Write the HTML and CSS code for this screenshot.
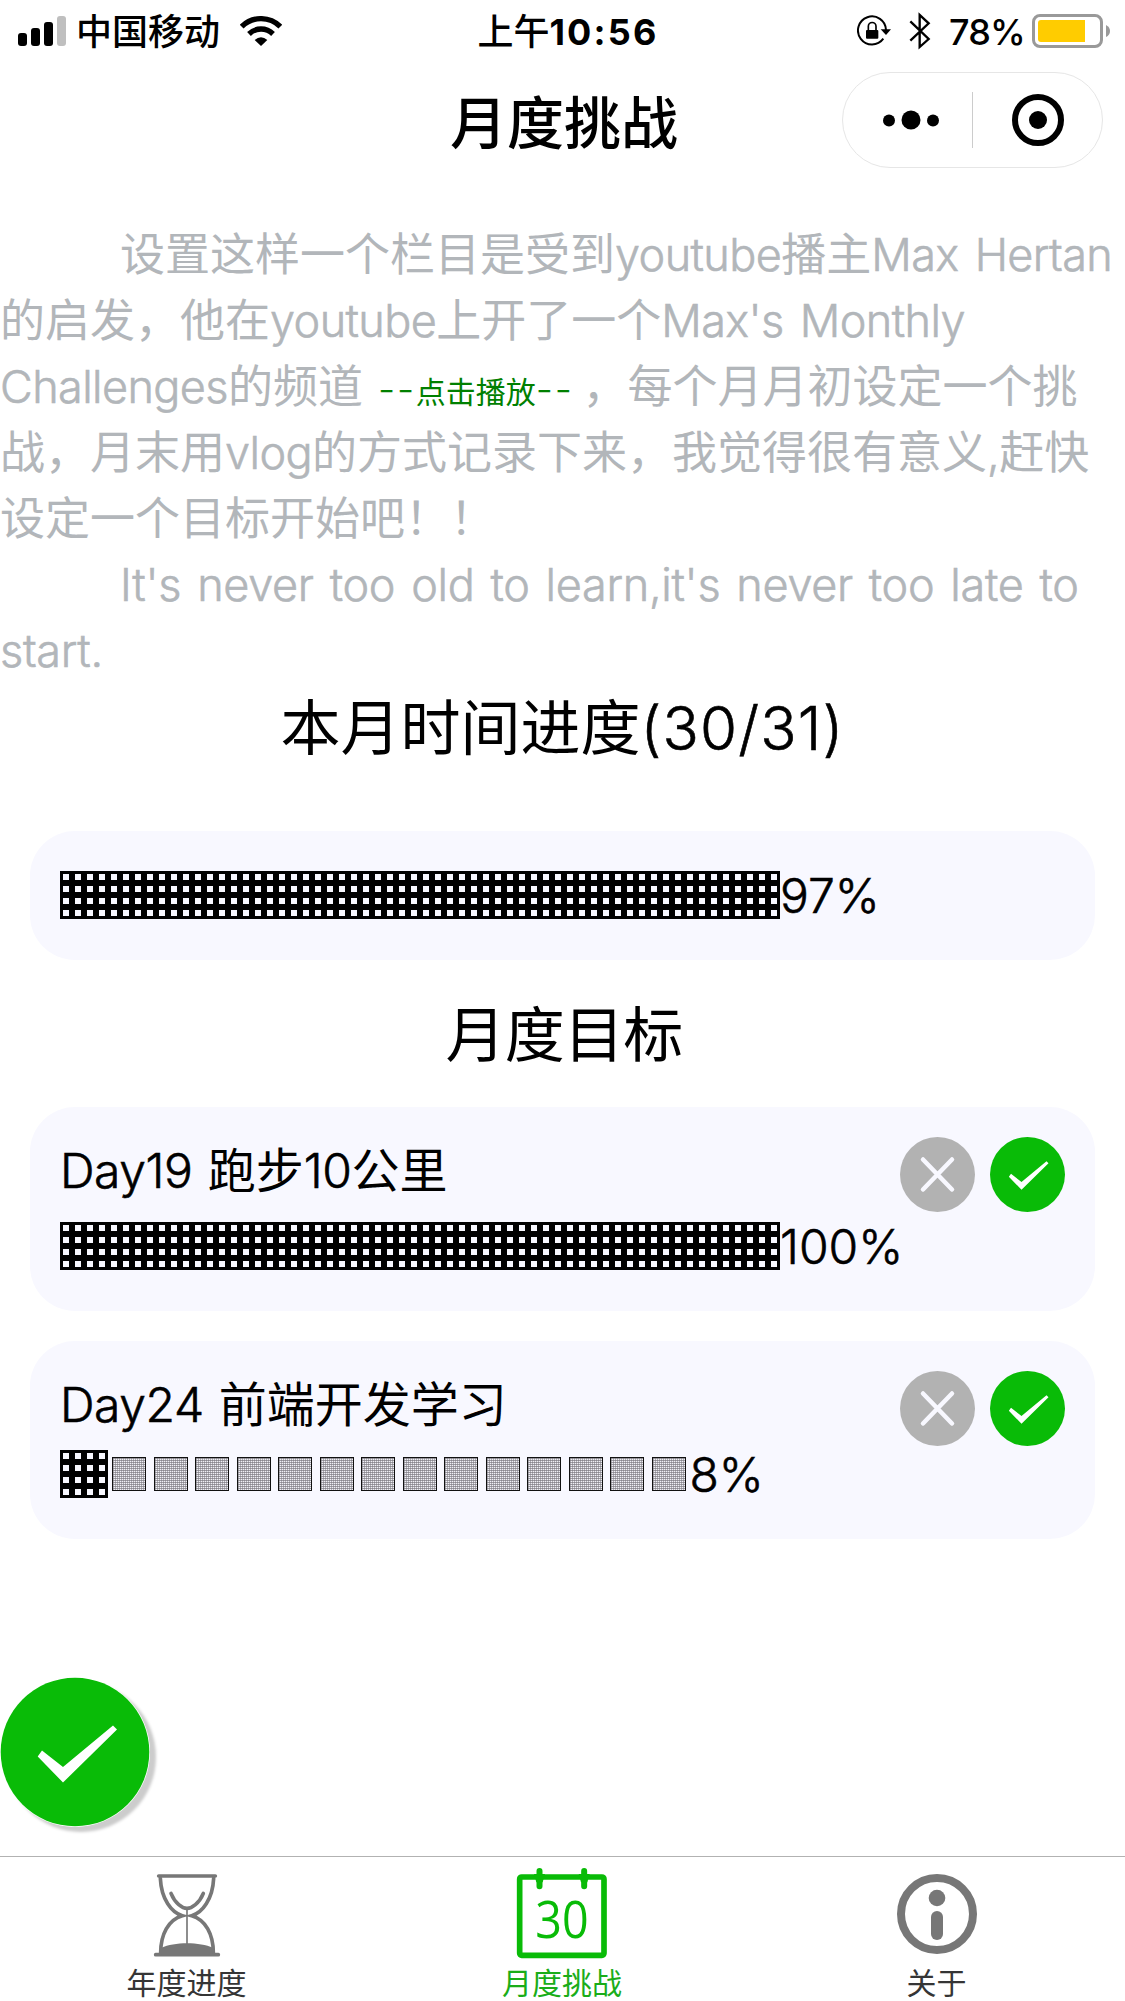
FILE: index.html
```html
<!DOCTYPE html>
<html lang="zh-CN">
<head>
<meta charset="utf-8">
<title>月度挑战</title>
<link rel="stylesheet" href="styles.css">
</head>
<body>
<header class="status-bar">
  <div class="status-left">
    <svg class="signal" width="48" height="30" viewBox="0 0 48 30"><rect y="17" width="9" height="13" rx="3"/><rect x="13" y="12" width="9" height="18" rx="3"/><rect x="26" y="6" width="9" height="24" rx="3"/><rect x="39" width="9" height="30" rx="3" fill="#bfbfbf"/></svg>
    <span class="carrier">中国移动</span>
    <svg class="wifi" width="42" height="30" viewBox="720 44 126 90"><path d="M725 76A82 82 0 0 1 841 76M747 98A51 51 0 0 1 819 98" fill="none" stroke="#000" stroke-width="16"/><path d="M783 134L764 116Q783 99 802 116Z"/></svg>
  </div>
  <div class="clock">上午<b class="en">10:56</b></div>
  <div class="status-right">
    <svg class="lock" width="35" height="32" viewBox="170 43 105 96"><path d="M249 114A42 42 0 1 1 257 88" fill="none" stroke="#000" stroke-width="6"/><path d="M241 86H272L257 103Z"/><rect x="197" y="88" width="37" height="26" rx="3"/><path d="M204 90V77A11.500 11.500 0 0 1 227 77V90" fill="none" stroke="#000" stroke-width="5"/></svg>
    <svg class="bluetooth" width="22" height="38" viewBox="326 34 66 114"><path d="M330 62L385 115L358 139V43L385 68L330 120" fill="none" stroke="#000" stroke-width="7"/></svg>
    <span class="percent en">78%</span>
    <svg class="battery" width="79" height="34" viewBox="0 0 79 34"><rect x="1.500" y="1.500" width="68" height="31" rx="6.500" fill="none" stroke="#999" stroke-width="3"/><path d="M9 6H53V28H9Q6 28 6 25V9Q6 6 9 6Z" fill="#fc0"/><path d="M74 11Q78 13 78 17T74 23Z" fill="#999"/></svg>
  </div>
</header>
<nav class="nav-bar">
  <h1 class="nav-title">月度挑战</h1>
  <div class="capsule">
    <svg width="56" height="20" viewBox="0 0 56 20"><circle cx="6" cy="10.500" r="6"/><circle cx="28" cy="10" r="9.500"/><circle cx="50" cy="10.500" r="6"/></svg>
    <i class="capsule-line"></i>
    <svg width="52" height="52" viewBox="0 0 52 52"><circle cx="26" cy="26" r="23" fill="none" stroke="#000" stroke-width="6"/><circle cx="26" cy="26" r="9"/></svg>
  </div>
</nav>
<main>
  <section class="intro">
    <p>设置这样一个栏目是受到<span class="en">youtube</span>播主<span class="en">Max Hertan</span><br>的启发，他在<span class="en">youtube</span>上开了一个<span class="en">Max's Monthly</span><br><span class="en">Challenges</span>的频道<a class="play"><span class="dash">--</span>点击播放<span class="dash">--</span></a>，每个月月初设定一个挑<br>战，月末用<span class="en">vlog</span>的方式记录下来，我觉得很有意义<span class="en">,</span>赶快<br>设定一个目标开始吧！！</p>
    <p class="motto"><span class="en">It's never too old to learn,it's never too late to</span><br><span class="en">start.</span></p>
  </section>
  <h2 class="heading">本月时间进度<span class="en">(30/31)</span></h2>
  <section class="card">
    <div class="progress"><i class="done" style="width:720px"></i><span class="en">97%</span></div>
  </section>
  <h2 class="heading goals">月度目标</h2>
  <section class="card">
    <div class="goal-head"><span><span class="en">Day19 </span>跑步<span class="en">10</span>公里</span>
      <span class="actions"><svg class="ico" viewBox="0 0 75 75"><circle cx="37.500" cy="37.500" r="37.500" fill="#b2b2b2"/><path d="M23 22.500L52 52.500M52 22.500L23 52.500" stroke="#f8f8ff" stroke-width="4.500" stroke-linecap="round"/></svg><svg class="ico" viewBox="0 0 150 150"><circle cx="75" cy="75" r="75" fill="#09bb07"/><path d="M37.700 79.500L42 73.500L63 90L113 48.500L117 52.500L63 105.500Z" fill="#fff"/></svg></span>
    </div>
    <div class="progress"><i class="done" style="width:720px"></i><span class="en">100%</span></div>
  </section>
  <section class="card compact">
    <div class="goal-head"><span><span class="en">Day24 </span>前端开发学习</span>
      <span class="actions"><svg class="ico" viewBox="0 0 75 75"><circle cx="37.500" cy="37.500" r="37.500" fill="#b2b2b2"/><path d="M23 22.500L52 52.500M52 22.500L23 52.500" stroke="#f8f8ff" stroke-width="4.500" stroke-linecap="round"/></svg><svg class="ico" viewBox="0 0 150 150"><circle cx="75" cy="75" r="75" fill="#09bb07"/><path d="M37.700 79.500L42 73.500L63 90L113 48.500L117 52.500L63 105.500Z" fill="#fff"/></svg></span>
    </div>
    <div class="progress"><i class="done" style="width:48px"></i><span class="todo"><i></i><i></i><i></i><i></i><i></i><i></i><i></i><i></i><i></i><i></i><i></i><i></i><i></i><i></i></span><span class="en">8%</span></div>
  </section>
</main>
<button class="fab"><svg width="150" height="150" viewBox="0 0 150 150"><circle cx="75" cy="75" r="74.300" fill="#09bb07"/><path d="M37.700 79.500L42 73.500L63 90L113 48.500L117 52.500L63 105.500Z" fill="#fff"/></svg></button>
<footer class="tab-bar">
  <a class="tab"><svg width="70" height="88" viewBox="456 660 210 264"><g fill="none" stroke="#777" stroke-width="11" stroke-linecap="round"><path d="M476 675H646M467 911H655"/><path d="M481 682C484 745 515 785 547 794C505 806 482 850 482 905M641 682C638 745 607 785 575 794C617 806 640 850 640 905"/><path d="M513 727C525 757 547 772 561 772S598 757 610 727"/><path d="M561 775V885" stroke-width="5"/></g><path d="M485 908V890C520 872 602 872 638 890V908Z" fill="#777"/></svg><span>年度进度</span></a>
  <a class="tab active"><svg width="92" height="92" viewBox="168 84 276 276"><rect x="179" y="114" width="253" height="235" rx="6" fill="none" stroke="#09bb07" stroke-width="17"/><path d="M238.500 96V142M372.500 96V142" stroke="#09bb07" stroke-width="18" stroke-linecap="round"/><path d="M222 105H255L248 130H229ZM356 105H389L382 130H363Z" fill="#09bb07"/><text class="cal-day" x="226" y="297" textLength="160" lengthAdjust="spacingAndGlyphs">30</text></svg><span>月度挑战</span></a>
  <a class="tab"><svg class="info" width="80" height="80" viewBox="0 0 80 80" fill="#777"><circle cx="40" cy="40" r="36" fill="none" stroke="#777" stroke-width="8"/><circle cx="40" cy="24" r="8.300"/><rect x="34" y="37" width="12" height="29" rx="6"/></svg><span>关于</span></a>
</footer>
</body>
</html>
```
FILE: styles.css
```css
* { box-sizing: border-box; }
body {
  margin: 0;
  width: 1125px;
  height: 2001px;
  display: flex;
  flex-direction: column;
  overflow: hidden;
  background: #fff;
  color: #000;
  font-family: Inter, "Noto Sans CJK SC", sans-serif;
}
h1, h2, p { margin: 0; }
svg { display: block; flex: none; }

.status-bar {
  height: 60px;
  display: grid;
  grid-template-columns: 1fr auto 1fr;
  align-items: center;
  padding: 0 14px 0 18px;
  font-size: 36px;
  line-height: 60px;
  font-weight: 500;
}
.status-left, .status-right { display: flex; align-items: center; }
.status-right { justify-content: flex-end; }
.carrier { margin-left: 10px; padding-top: 2px; }
.wifi { margin-left: 20px; }
.clock { padding: 2px 0 0 7px; }
.clock b { font-weight: 700; letter-spacing: 2.2px; }
.lock { margin-right: 17px; }
.bluetooth { margin-right: 18px; }
.percent { padding-top: 2px; letter-spacing: -0.8px; }
.battery { margin-left: 7px; }

.nav-bar {
  height: 161px;
  display: grid;
  grid-template-columns: 1fr auto 1fr;
}
.nav-title {
  grid-column: 2;
  padding-left: 3px;
  font-size: 57px;
  line-height: 128px;
  font-weight: 500;
}
.capsule {
  justify-self: end;
  margin: 12px 22px 0 0;
  width: 261px;
  height: 96px;
  border: 1px solid #e6e6e6;
  border-radius: 48px;
  display: flex;
  align-items: center;
  padding-left: 40px;
}
.capsule-line { width: 1px; height: 56px; margin: 0 39px 0 33px; background: #ccc; }

main .en { font-weight: 300; -webkit-text-stroke: 0.6px currentColor; }

.intro {
  height: 462px;
  padding-top: 1px;
  font-size: 45px;
  line-height: 66px;
  font-weight: 400;
  color: #b2b6ba;
  white-space: nowrap;
}
.intro p { text-indent: 120px; }
.intro .en { letter-spacing: -0.6px; word-spacing: 4px; }
.intro .motto .en { letter-spacing: -0.3px; word-spacing: 3.6px; }
.play { font-size: 30px; line-height: 1; color: #008000; margin: 0 9px 0 15px; }
.dash { font-size: 38px; line-height: 1; font-weight: 300; letter-spacing: 1.7px; }

.heading {
  font-size: 60px;
  line-height: 90px;
  font-weight: 400;
  text-align: center;
}
.heading .en { letter-spacing: 1.1px; }
.goals { margin-top: 30px; margin-bottom: 27px; padding-left: 3px; letter-spacing: -0.8px; }
.heading:not(.goals) { margin-bottom: 58px; }

.card {
  margin: 0 30px;
  padding: 30px;
  border-radius: 45px;
  background: #f8f8ff;
  font-size: 48px;
  font-weight: 400;
}
.card.compact { margin-top: 30px; }
.goal-head {
  display: flex;
  justify-content: space-between;
  height: 75px;
  line-height: 67px;
  white-space: pre;
}
.goal-head .en { letter-spacing: -0.4px; word-spacing: 2px; }
.compact .goal-head { height: 69px; }
.actions { display: flex; gap: 15px; }
.ico { width: 75px; height: 75px; }
.progress { display: flex; align-items: center; height: 69px; line-height: 69px; }
.done {
  height: 48px;
  margin-bottom: 2px;
  background:
    linear-gradient(90deg, #000 3px, transparent 3px 9px, #000 9px) 0 0 / 12px 12px,
    linear-gradient(#000 3px, transparent 3px 9px, #000 9px) 0 0 / 12px 12px;
}
.todo { display: flex; gap: 7.5px; margin: 0 4px 2px; }
.todo i {
  width: 34px;
  height: 34px;
  border: 1.500px solid #111;
  background:
    repeating-linear-gradient(90deg, #77757c88 0 1px, transparent 1px 2px),
    repeating-linear-gradient(#9f9da4 0 1px, #f0f0f6 1px 2px);
}

.fab {
  position: absolute;
  left: 0;
  top: 1677px;
  width: 150px;
  height: 150px;
  padding: 0;
  border: 0;
  border-radius: 50%;
  background: #fff;
  box-shadow: 6px 5px 3px #ccc;
}
.tab-bar {
  margin-top: auto;
  height: 145px;
  flex: none;
  border-top: 1px solid #b2b2b2;
  display: grid;
  grid-template-columns: repeat(3, 1fr);
}
.tab {
  display: flex;
  flex-direction: column;
  align-items: center;
  justify-content: flex-end;
  gap: 6px;
  padding-right: 2px;
  color: #353535;
  font-size: 30px;
  line-height: 36px;
}
.info { margin-bottom: 5px; }
.active { color: #1aad19; padding-right: 1px; }
.cal-day { font: 152px "Open Sans", sans-serif; fill: #09bb07; }
```
